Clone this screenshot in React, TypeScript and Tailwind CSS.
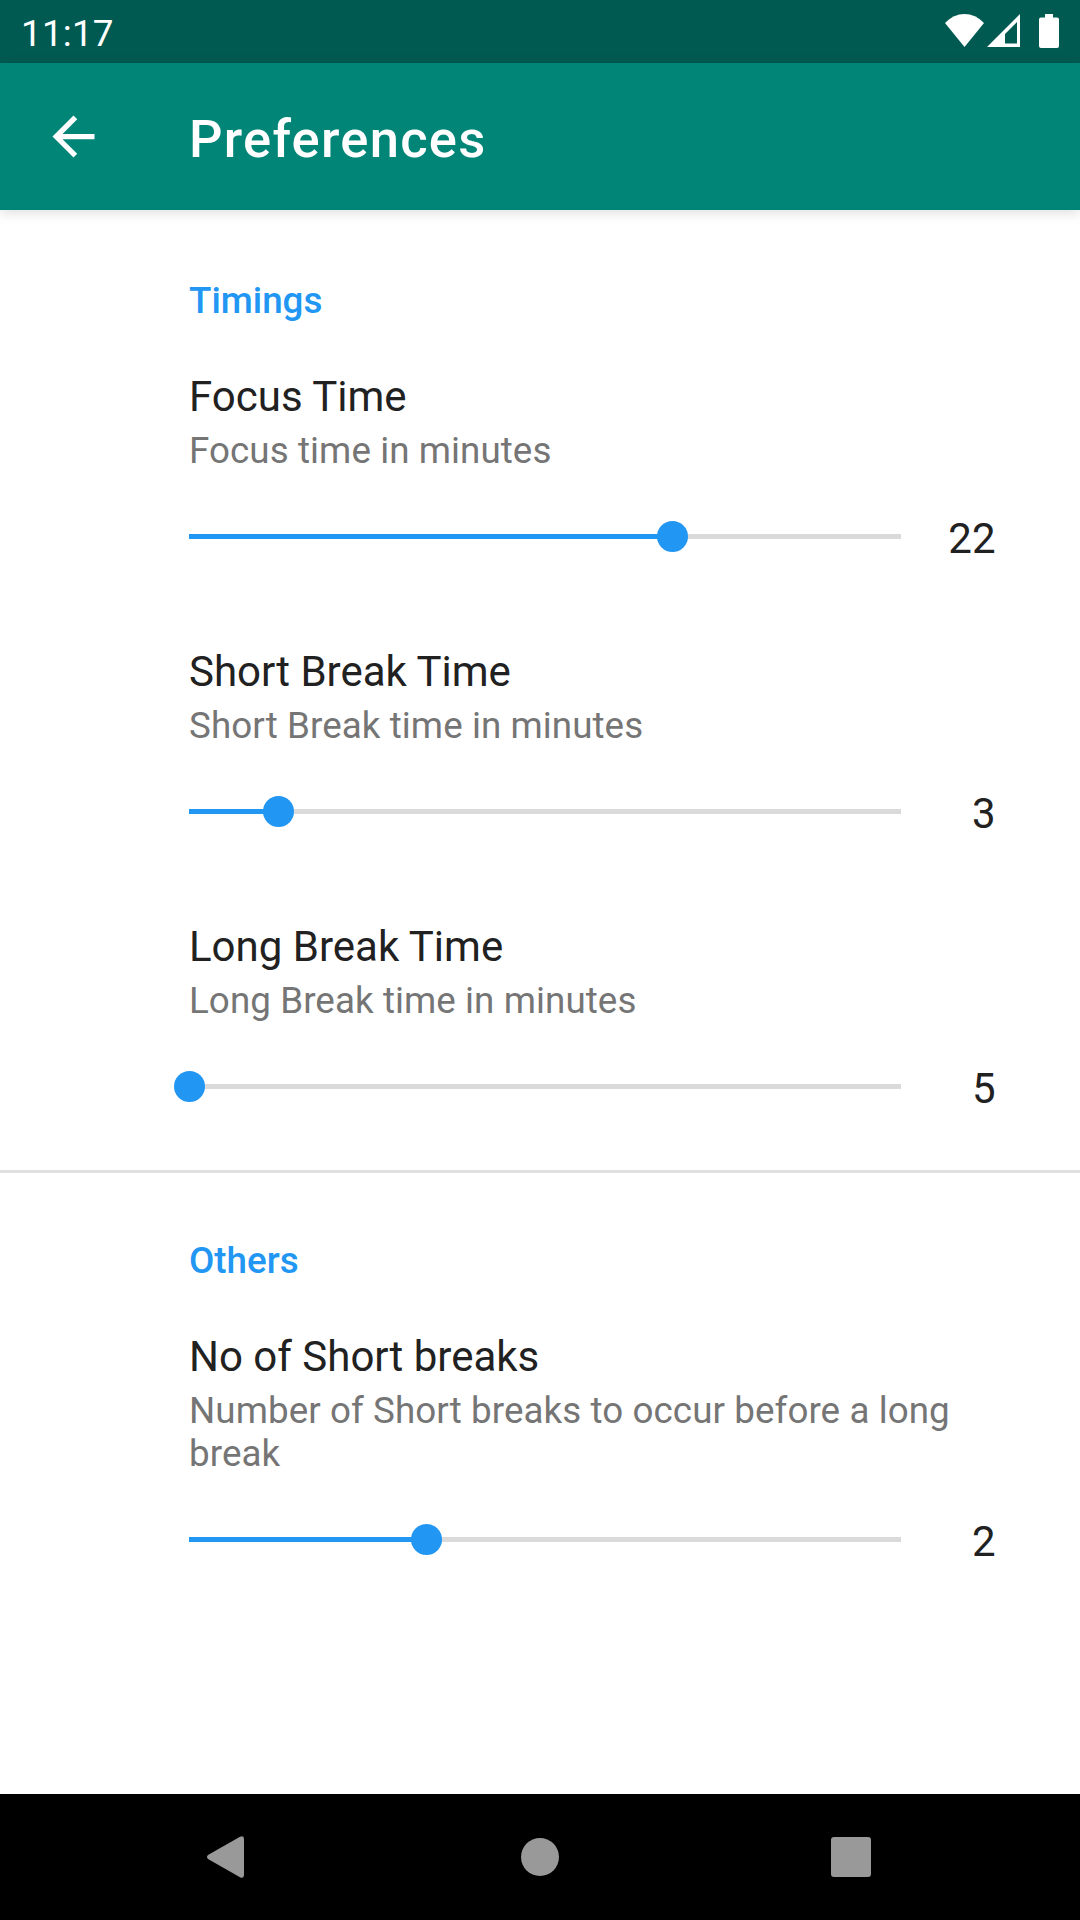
type Preference = {
  title: string;
  summary: string;
  value: number;
  min: number;
  max: number;
};

const timings: Preference[] = [
  { title: "Focus Time", summary: "Focus time in minutes", value: 22, min: 3, max: 31 },
  { title: "Short Break Time", summary: "Short Break time in minutes", value: 3, min: 2, max: 10 },
  { title: "Long Break Time", summary: "Long Break time in minutes", value: 5, min: 5, max: 20 },
];

const others: Preference[] = [
  {
    title: "No of Short breaks",
    summary: "Number of Short breaks to occur before a long break",
    value: 2,
    min: 1,
    max: 4,
  },
];

function StatusBar() {
  return (
    <div className="flex h-[63px] shrink-0 items-start justify-between bg-[#005a52] pr-[21px] pl-[21px] text-white">
      <span className="mt-[12px] text-[36.75px] leading-[43px] tracking-[0.25px]">11:17</span>
      <div className="mt-[14px] flex items-start">
        <svg className="h-[33px] w-[39px]" viewBox="0 0 39 33" fill="currentColor">
          <path d="M19.5 33 L0 9 Q8.500 0 19.500 0 Q30.500 0 39 9 Z" />
        </svg>
        <svg className="ml-[3px] h-[33px] w-[33px]" viewBox="0 0 33 33" fill="currentColor" fillRule="evenodd">
          <path d="M33 0 V33 H0 Z M30 8 L18 20 V29.500 H30 Z" />
        </svg>
        <svg className="ml-[19px] h-[34px] w-[20px]" viewBox="0 0 20 34" fill="currentColor">
          <path d="M6 0 H14 V3.500 H18 Q20 3.500 20 5.500 V32 Q20 34 18 34 H2 Q0 34 0 32 V5.500 Q0 3.500 2 3.500 H6 Z" />
        </svg>
      </div>
    </div>
  );
}

function AppBar() {
  return (
    <header className="z-10 flex h-[147px] shrink-0 items-center bg-[#008577] pl-[42px] text-white shadow-[0_3px_12px_rgba(0,0,0,0.13)]">
      <svg className="h-[63px] w-[63px]" viewBox="0 0 24 24" fill="currentColor">
        <path d="M20 11H7.83l5.59-5.59L12 4l-8 8 8 8 1.410-1.410L7.830 13H20v-2z" />
      </svg>
      <h1 className="mt-[5px] ml-[84px] text-[52.5px] leading-[62px] font-medium tracking-[1.25px]">Preferences</h1>
    </header>
  );
}

function Slider({ fraction }: { fraction: number }) {
  return (
    <div className="relative flex h-[45px] w-[712px] items-center">
      <div className="h-[5px] w-full bg-[#dadada]">
        <div className="h-full bg-[#2196f3]" style={{ width: `${fraction * 100}%` }} />
      </div>
      <div
        className="absolute top-[7px] -ml-[15px] h-[31px] w-[31px] rounded-full bg-[#2196f3]"
        style={{ left: `${fraction * 100}%` }}
      />
    </div>
  );
}

function PreferenceItem({ title, summary, value, min, max }: Preference) {
  return (
    <div className="py-[42px] pr-[84.5px] pl-[189px]">
      <h3 className="text-[42px] leading-[49px] text-[#212121]">{title}</h3>
      <p className="mt-2 text-[36.75px] leading-[43px] tracking-[0.08px] text-[#757575]">{summary}</p>
      <div className="mt-[42px] flex h-[49px] items-start justify-between">
        <Slider fraction={(value - min) / (max - min)} />
        <span className="text-[42px] leading-[49px] text-[#212121]">{value}</span>
      </div>
    </div>
  );
}

function Category({ title, items, first }: { title: string; items: Preference[]; first?: boolean }) {
  return (
    <section className={first ? "pt-[69px] pb-[15px]" : "border-t-[3px] border-[#e0e0e0] pt-[66px]"}>
      <h2 className="mb-2 pl-[189px] text-[36.75px] leading-[43px] font-medium text-[#2196f3]">{title}</h2>
      {items.map((item) => (
        <PreferenceItem key={item.title} {...item} />
      ))}
    </section>
  );
}

function NavigationBar() {
  return (
    <nav className="flex h-[126px] shrink-0 items-center bg-black text-[#999999]">
      <svg className="ml-[206px] h-[42px] w-[38px]" viewBox="0 0 38 42" fill="currentColor">
        <path d="M34 .8 Q38 -1 38 3 V39 Q38 43 34 41.200 L2 23 Q0 21 2 19 Z" />
      </svg>
      <div className="ml-[277px] h-[38px] w-[38px] rounded-full bg-[#999999]" />
      <div className="ml-[272px] h-10 w-10 rounded-[3px] bg-[#999999]" />
    </nav>
  );
}

export default function App() {
  return (
    <div className="flex h-[1920px] w-[1080px] flex-col overflow-hidden bg-white font-[Roboto,sans-serif]">
      <StatusBar />
      <AppBar />
      <main className="flex-1">
        <Category title="Timings" items={timings} first />
        <Category title="Others" items={others} />
      </main>
      <NavigationBar />
    </div>
  );
}
